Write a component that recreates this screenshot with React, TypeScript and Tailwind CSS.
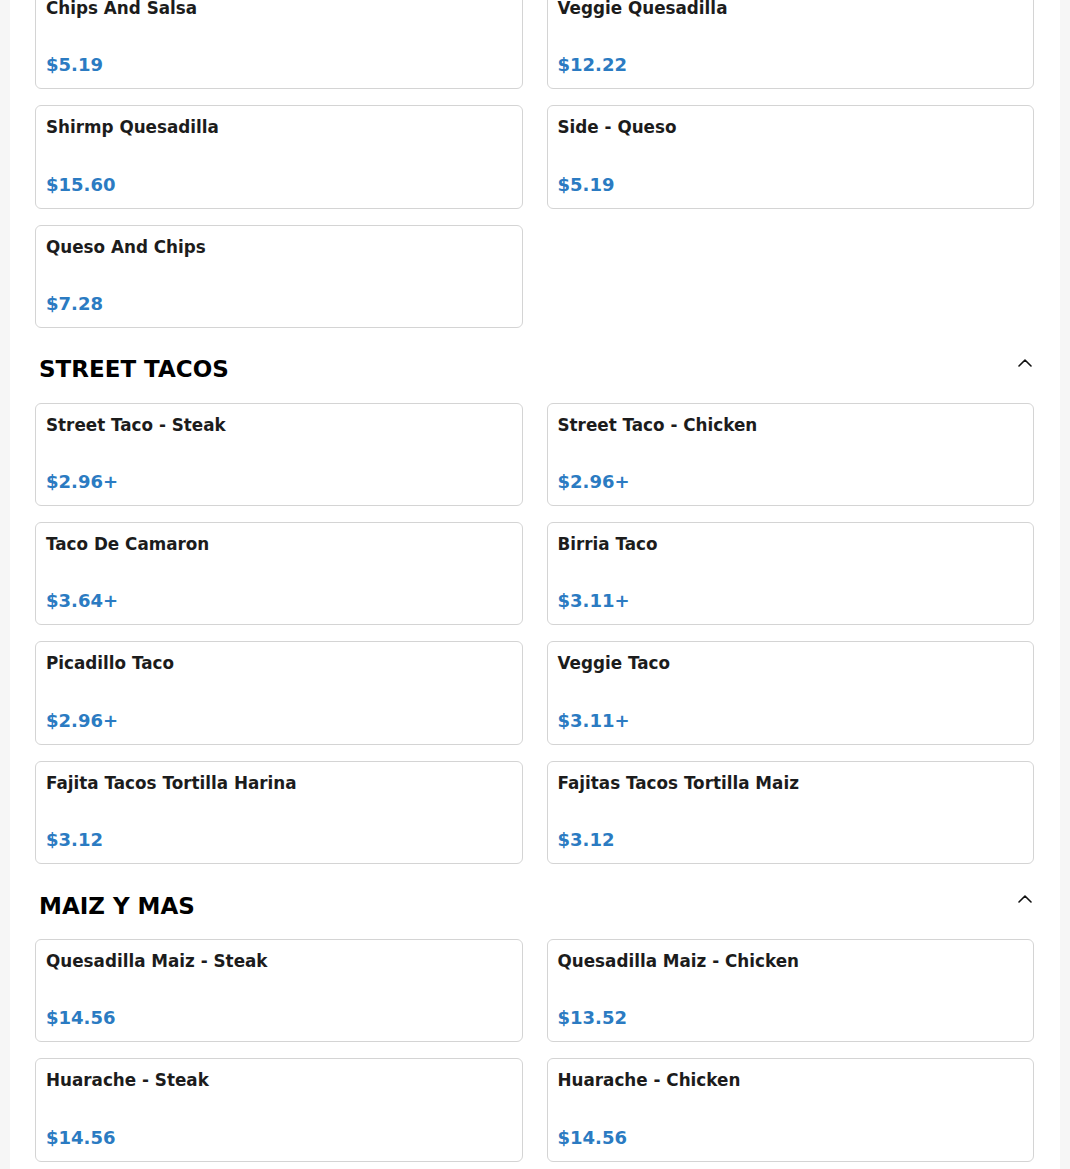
type Item = { name: string; price: string };

const SIDES: Item[] = [
  { name: "Chips And Salsa", price: "$5.19" },
  { name: "Veggie Quesadilla", price: "$12.22" },
  { name: "Shirmp Quesadilla", price: "$15.60" },
  { name: "Side - Queso", price: "$5.19" },
  { name: "Queso And Chips", price: "$7.28" },
];

const SECTIONS: { title: string; items: Item[] }[] = [
  {
    title: "STREET TACOS",
    items: [
      { name: "Street Taco - Steak", price: "$2.96+" },
      { name: "Street Taco - Chicken", price: "$2.96+" },
      { name: "Taco De Camaron", price: "$3.64+" },
      { name: "Birria Taco", price: "$3.11+" },
      { name: "Picadillo Taco", price: "$2.96+" },
      { name: "Veggie Taco", price: "$3.11+" },
      { name: "Fajita Tacos Tortilla Harina", price: "$3.12" },
      { name: "Fajitas Tacos Tortilla Maiz", price: "$3.12" },
    ],
  },
  {
    title: "MAIZ Y MAS",
    items: [
      { name: "Quesadilla Maiz - Steak", price: "$14.56" },
      { name: "Quesadilla Maiz - Chicken", price: "$13.52" },
      { name: "Huarache - Steak", price: "$14.56" },
      { name: "Huarache - Chicken", price: "$14.56" },
    ],
  },
];

function Chevron() {
  return (
    <svg width="14" height="8" viewBox="0 0 14 8" fill="none" className="mr-[2px] mt-[5.5px] shrink-0">
      <path d="M1 7L7 1L13 7" stroke="#111" strokeWidth="1.6" strokeLinecap="round" strokeLinejoin="round" />
    </svg>
  );
}

function ItemCard({ item }: { item: Item }) {
  return (
    <div className="flex h-[103.3px] flex-col justify-between rounded-[6px] border border-[#d4d4d4] bg-white px-[10px] pb-[9px] pt-[10px]">
      <p className="text-[16.8px] font-bold leading-[22px] text-[#1c1c1c]">{item.name}</p>
      <p className="text-[18px] font-bold leading-[28px] text-[#2b7bc2]">{item.price}</p>
    </div>
  );
}

function ItemGrid({ items }: { items: Item[] }) {
  return (
    <div className="grid grid-cols-2 gap-x-[24px] gap-y-4">
      {items.map((item) => (
        <ItemCard key={item.name} item={item} />
      ))}
    </div>
  );
}

export default function App() {
  return (
    <div className="min-h-screen bg-[#f6f6f6] font-['DejaVu_Sans',sans-serif]">
      <div className="mx-[10px] overflow-hidden bg-white pb-10 pl-[25px] pr-[26px]">
        <div className="-mt-[14px]">
          <ItemGrid items={SIDES} />
        </div>
        {SECTIONS.map((section) => (
          <section key={section.title}>
            <div className="flex items-start justify-between pb-[17.5px] pl-1 pt-[25.5px]">
              <h2 className="text-[23px] font-bold leading-[32px] text-black">{section.title}</h2>
              <Chevron />
            </div>
            <ItemGrid items={section.items} />
          </section>
        ))}
      </div>
    </div>
  );
}
